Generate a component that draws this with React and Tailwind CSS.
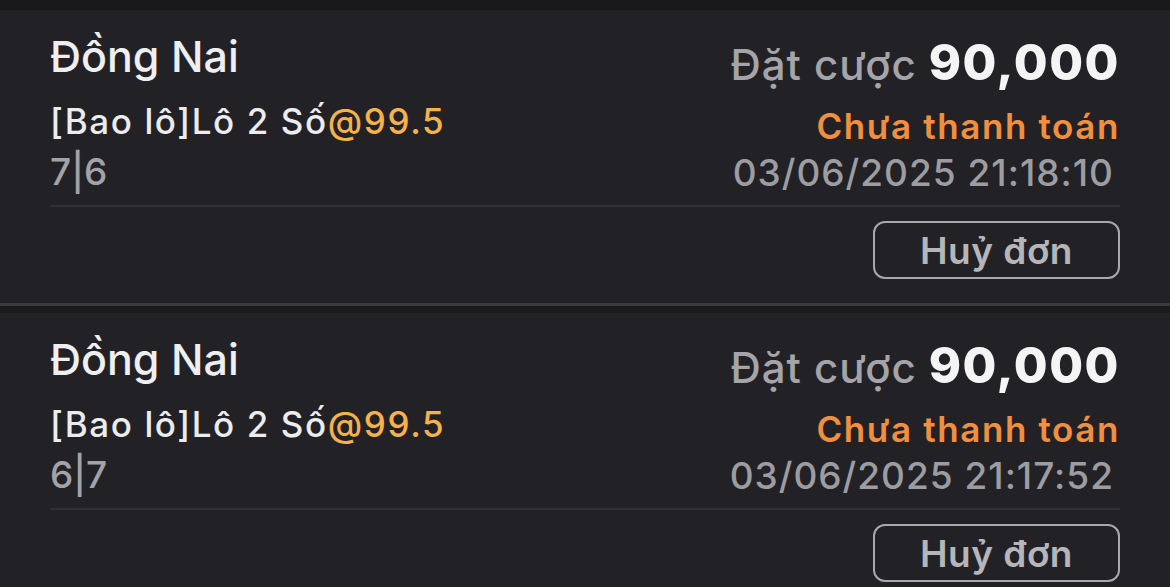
import React from 'react';

const orders = [
    { province: 'Đồng Nai', bet: '[Bao lô]Lô 2 Số', odds: '@99.5', numbers: '7|6', amount: '90,000', time: '03/06/2025 21:18:10' },
    { province: 'Đồng Nai', bet: '[Bao lô]Lô 2 Số', odds: '@99.5', numbers: '6|7', amount: '90,000', time: '03/06/2025 21:17:52' },
];

const OrderCard = ({ order }) => (
    <div className="border-b-[7px] border-[#1b1b1e]">
        <div className="bg-[#222226] border-b-[3px] border-[#3b3b3f] px-[50px] pt-[20px] pb-[24px]">
            <div className="flex justify-between items-start">
                <div>
                    <div className="text-[43px] leading-[52px] font-medium text-[#efeff1]">{order.province}</div>
                    <div className="mt-[17px] text-[35px] leading-[44px] font-medium tracking-[1.6px] text-[#ececee]">
                        {order.bet}<span className="text-[#f5b24c]">{order.odds}</span>
                    </div>
                    <div className="mt-[7px] text-[37px] leading-[44px] font-medium text-[#a3a3a7]">{order.numbers}</div>
                </div>
                <div className="flex flex-col items-end mt-[5px]">
                    <div className="text-[49px] leading-[56px] font-extrabold tracking-[1.5px] text-[#f4f4f5]">
                        <span className="text-[42px] font-medium tracking-[1px] text-[#a5a5a9] mr-[12px]">Đặt cược</span>{order.amount}
                    </div>
                    <div className="mt-[11px] text-[35px] leading-[44px] font-semibold tracking-[1.6px] text-[#f28f3f]">Chưa thanh toán</div>
                    <div className="mt-[3px] mr-[6px] text-[37px] leading-[44px] font-medium tracking-[1px] text-[#9d9da1]">{order.time}</div>
                </div>
            </div>
            <div className="mt-[10px] h-[2px] bg-[#313135]" />
            <div className="mt-[14px] flex justify-end">
                <button className="w-[247px] h-[58px] rounded-[12px] border-2 border-[#a9a9ac] text-[37px] font-semibold tracking-[0.5px] text-[#b6b6b9] leading-none">
                    Huỷ đơn
                </button>
            </div>
        </div>
    </div>
);

const App = () => (
    <div className="w-[1170px] h-[587px] overflow-hidden bg-[#222226]" style={{ fontFamily: 'Inter, "Noto Sans", sans-serif' }}>
        <div className="h-[10px] bg-[#19191b]" />
        {orders.map((order, i) => (
            <OrderCard key={i} order={order} />
        ))}
    </div>
);

export default App;
